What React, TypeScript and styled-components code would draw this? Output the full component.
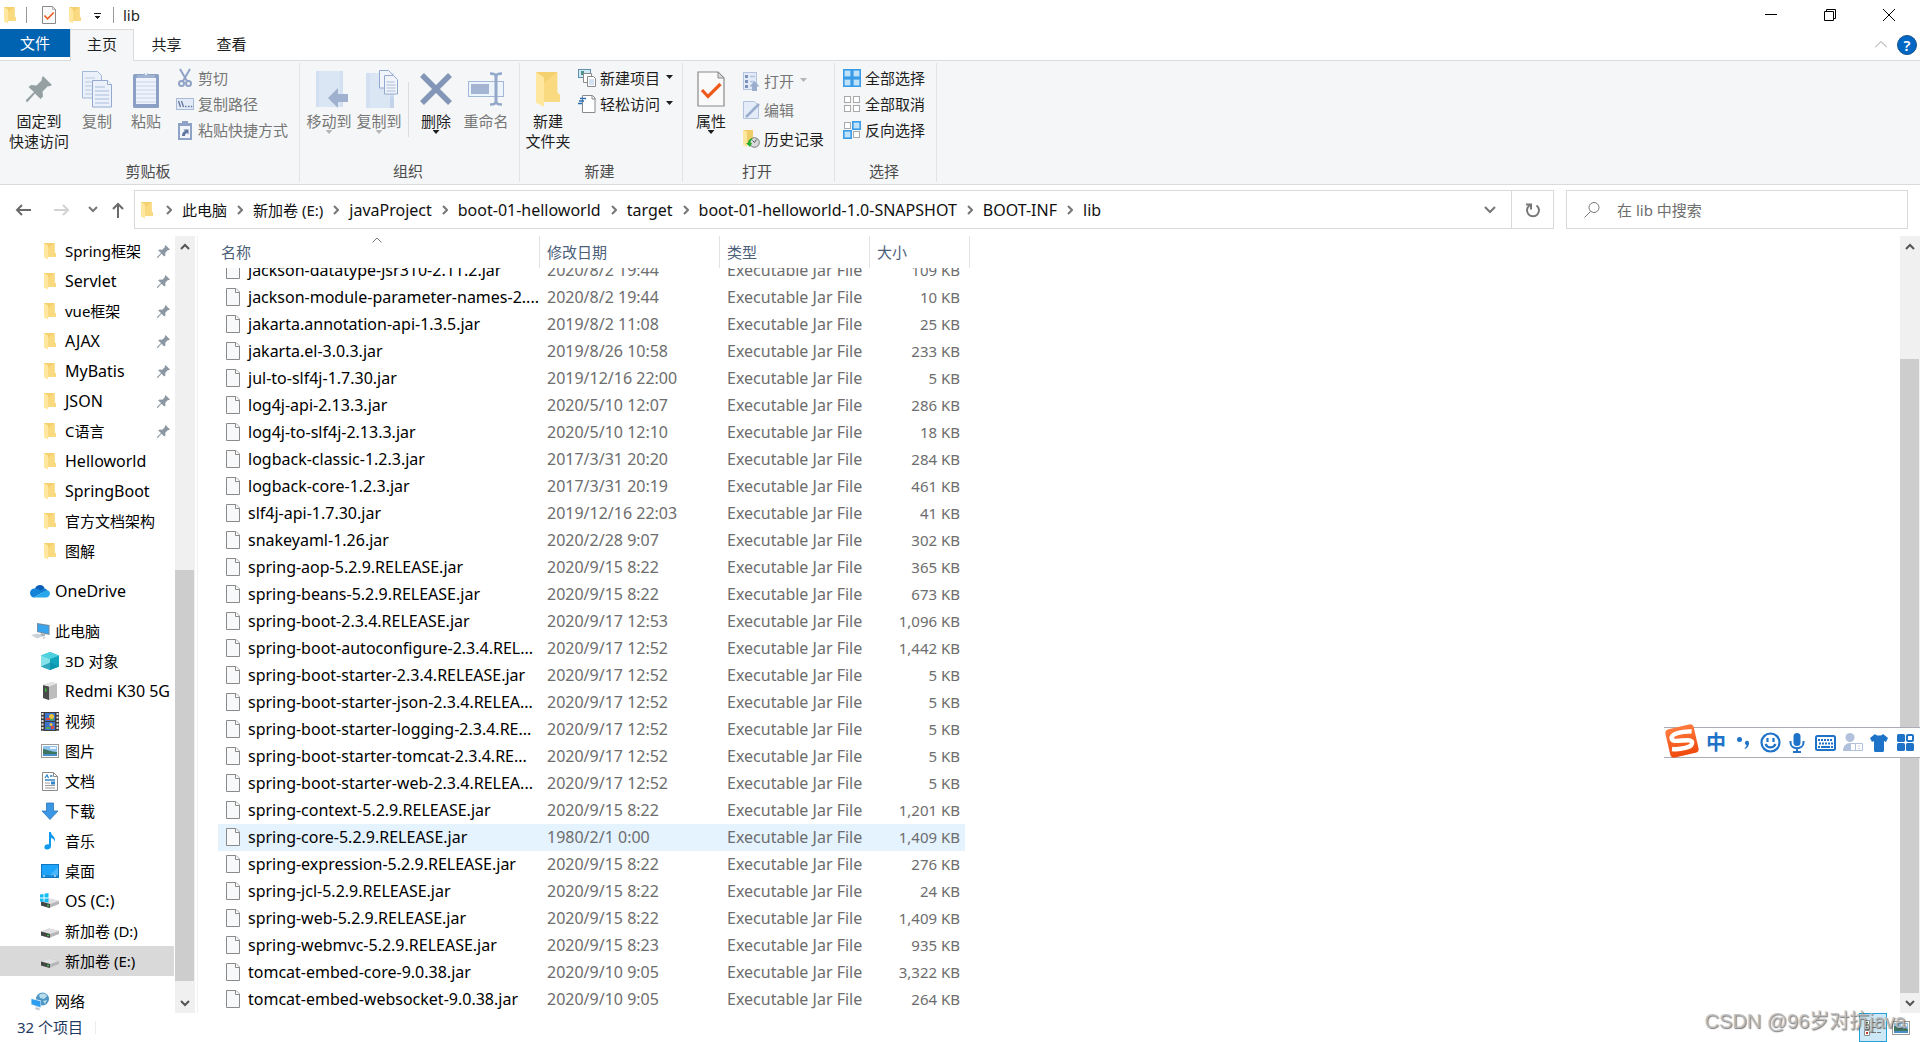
import React from "react";
import styled, { createGlobalStyle } from "styled-components";

const Global = createGlobalStyle`
  *, *::before, *::after { box-sizing: border-box; }
  body { margin: 0; background: #fff; overflow: hidden; }
  button, input { font: inherit; color: inherit; }
  button { border: 0; padding: 0; background: none; }
  svg { display: block; flex: none; }
`;

const Window = styled.div`
  display: flex;
  flex-direction: column;
  height: 100vh;
  font: 15px/20px "Noto Sans", "Noto Sans CJK SC", sans-serif;
  color: #1e1e1e;
  background: #fff;
`;

/* ---------- title bar ---------- */

const TitleBar = styled.header`
  display: flex;
  align-items: center;
  height: 29px;
  padding: 0 2px 0 3px;
`;
const QuickAccess = styled.div`
  display: flex;
  align-items: center;
  gap: 9px;
  flex: 1;
`;
const Bar = styled.span`
  width: 1px;
  height: 16px;
  background: #999;
`;
const QuickTools = styled.div`
  display: flex;
  align-items: center;
  gap: 12px;
  padding: 0 3px 0 6px;
`;
const Title = styled.h1`
  margin: 0;
  font-size: 15px;
  font-weight: 400;
`;
const WindowButton = styled.button`
  display: grid;
  place-items: center;
  width: 59px;
  height: 29px;
`;

/* ---------- tabs ---------- */

const TabRow = styled.nav`
  display: flex;
  height: 32px;
  border-bottom: 1px solid #dadbdc;
`;
const FileTab = styled.button`
  width: 70px;
  height: 28px;
  color: #fff;
  background: #0063b1;
`;
const Tab = styled.button<{ $active?: boolean }>`
  width: ${(p) => (p.$active ? 64 : 65)}px;
  height: 32px;
  padding-bottom: 3px;
  border: 1px solid ${(p) => (p.$active ? "#dadbdc" : "transparent")};
  border-bottom: 0;
  background: ${(p) => (p.$active ? "#f5f6f7" : "transparent")};
`;
const TabTools = styled.div`
  display: flex;
  align-items: center;
  gap: 10px;
  margin-left: auto;
  padding-right: 3px;
`;
const Help = styled.button`
  width: 20px;
  height: 20px;
  border: 1px solid #17518a;
  border-radius: 50%;
  color: #fff;
  background: #0067c5;
  font-weight: 600;
  line-height: 18px;
`;

/* ---------- ribbon ---------- */

const Ribbon = styled.section`
  display: flex;
  height: 124px;
  padding: 2px 0;
  background: #f5f6f7;
  border-bottom: 1px solid #dadbdc;
`;
const Group = styled.div<{ $width: number }>`
  display: flex;
  flex-direction: column;
  width: ${(p) => p.$width}px;
  padding: 2px 0 1px 4px;
  border-right: 1px solid #e2e3e4;
`;
const GroupBody = styled.div`
  display: flex;
  flex: 1;
`;
const GroupLabel = styled.div`
  height: 20px;
  padding-right: 7px;
  color: #4c4c4c;
  text-align: center;
`;
const BigButton = styled.button<{ $width: number; $off?: boolean }>`
  display: flex;
  flex-direction: column;
  align-items: center;
  width: ${(p) => p.$width}px;
  padding-top: 3px;
  white-space: nowrap;
  color: ${(p) => (p.$off ? "#767676" : "#1e1e1e")};
`;
const BigIcon = styled.span`
  display: grid;
  place-items: center;
  height: 43px;
  padding-bottom: 2px;
`;
const Divider = styled.span`
  width: 1px;
  height: 55px;
  margin: 17px 4px 0;
  background: #dcdddf;
`;
const SmallColumn = styled.div<{ $left: number; $roomy?: boolean }>`
  display: flex;
  flex-direction: column;
  gap: ${(p) => (p.$roomy ? 9 : 6)}px;
  padding-top: ${(p) => (p.$roomy ? 6 : 3)}px;
  padding-left: ${(p) => p.$left}px;
`;
const SmallButton = styled.button<{ $off?: boolean }>`
  display: flex;
  align-items: center;
  gap: 4px;
  height: 20px;
  white-space: nowrap;
  color: ${(p) => (p.$off ? "#767676" : "#1e1e1e")};
`;
const Caret = styled.span<{ $off?: boolean; $below?: boolean }>`
  width: 7px;
  height: 4px;
  margin: ${(p) => (p.$below ? "-1px 0 0" : "0 0 2px 2px")};
  background: ${(p) => (p.$off ? "#b5b5b5" : "#1e1e1e")};
  clip-path: polygon(0 0, 100% 0, 50% 100%);
`;

/* ---------- address row ---------- */

const AddressRow = styled.div`
  display: flex;
  align-items: center;
  height: 51px;
  padding: 0 12px 2px 0;
`;
const NavButtons = styled.div`
  display: flex;
  align-items: center;
  width: 134px;
  padding-left: 15px;
`;
const NavButton = styled.button<{ $width: number }>`
  width: ${(p) => p.$width}px;
  display: flex;
`;
const AddressBox = styled.div`
  display: flex;
  flex: 1;
  height: 39px;
  border: 1px solid #d9d9d9;
`;
const Crumbs = styled.div`
  display: flex;
  align-items: center;
  gap: 10px;
  flex: 1;
  padding-left: 5px;
  color: #111;
  white-space: nowrap;
`;
const Crumb = styled.a<{ $size: number }>`
  color: inherit;
  font-size: ${(p) => p.$size}px;
  text-decoration: none;
`;
const FirstIcon = styled.span`
  padding-right: 2px;
`;
const AddressButton = styled.button<{ $edge?: boolean }>`
  display: grid;
  place-items: center;
  width: 42px;
  border-left: ${(p) => (p.$edge ? "1px solid #d9d9d9" : "0")};
`;
const SearchBox = styled.label`
  display: flex;
  align-items: center;
  gap: 17px;
  width: 342px;
  height: 39px;
  margin-left: 12px;
  padding-left: 17px;
  border: 1px solid #d9d9d9;
`;
const SearchInput = styled.input`
  flex: 1;
  min-width: 0;
  border: 0;
  outline: 0;
  padding: 0;
  background: none;
  &::placeholder { color: #6d6d6d; opacity: 1; }
`;

/* ---------- body ---------- */

const Body = styled.main`
  display: flex;
  flex: 1;
  min-height: 0;
`;
const Sidebar = styled.aside`
  display: flex;
  width: 198px;
  padding-right: 2px;
  border-right: 1px solid #f2f2f2;
`;
const Tree = styled.nav`
  flex: 1;
  overflow: hidden;
  padding-right: 1px;
`;
const TreeGroup = styled.div`
  margin-bottom: 10px;
`;
const TreeItem = styled.a<{ $root?: boolean; $selected?: boolean; $size: number }>`
  display: flex;
  align-items: center;
  gap: 5px;
  height: 30px;
  padding: 0 4px 0 ${(p) => (p.$root ? 30 : 40)}px;
  color: #000;
  font-size: ${(p) => p.$size}px;
  text-decoration: none;
  white-space: nowrap;
  background: ${(p) => (p.$selected ? "#d9d9d9" : "transparent")};
`;
const TreeLabel = styled.span`
  flex: 1;
`;
const IconSlot = styled.span`
  display: grid;
  place-items: center;
  width: 20px;
  height: 20px;
`;

const Track = styled.div`
  display: flex;
  flex-direction: column;
  width: 20px;
  background: #f0f0f0;
`;
const TrackButton = styled.button`
  display: grid;
  place-items: center;
  height: 20px;
`;
const TrackSpace = styled.div<{ $share: number }>`
  flex: ${(p) => p.$share} 1 0;
`;
const Thumb = styled(TrackSpace)`
  width: 19px;
  background: #cdcdcd;
`;

const FilePane = styled.section`
  display: flex;
  flex: 1;
  padding-left: 20px;
`;
const FileTable = styled.table`
  display: flex;
  flex-direction: column;
  flex: 1;
  min-height: 0;
`;
const columns = "322px 180px 150px 1fr";
const Head = styled.thead`
  display: block;
`;
const HeadRow = styled.tr`
  display: grid;
  grid-template-columns: ${columns};
  width: 752px;
  height: 32px;
`;
const HeadCell = styled.th<{ $first?: boolean }>`
  position: relative;
  padding: 6px 0 0 ${(p) => (p.$first ? 3 : 7)}px;
  border-right: 1px solid #e3e3e3;
  font-weight: 400;
  text-align: left;
  color: #4c607a;
`;
const SortMark = styled.span`
  position: absolute;
  top: 1px;
  left: 50%;
  margin-left: -7px;
`;
const Rows = styled.tbody`
  display: flex;
  flex: 1;
  flex-direction: column;
  justify-content: flex-end;
  min-height: 0;
  overflow: hidden;
`;
const Row = styled.tr<{ $hover?: boolean }>`
  display: grid;
  grid-template-columns: ${columns};
  flex: none;
  width: 747px;
  height: 27px;
  line-height: 27px;
  color: #6d6d6d;
  background: ${(p) => (p.$hover ? "#e5f3ff" : "transparent")};
`;
const Cell = styled.td<{ $right?: boolean }>`
  padding: 0 ${(p) => (p.$right ? 5 : 0)}px 0 7px;
  font-size: ${(p) => (p.$right ? 15 : 16)}px;
  text-align: ${(p) => (p.$right ? "right" : "left")};
  white-space: nowrap;
`;
const NameCell = styled.td`
  display: flex;
  align-items: center;
  gap: 8px;
  min-width: 0;
  padding: 0 0 0 8px;
  font-size: 16px;
  color: #000;
`;
const FileName = styled.span`
  white-space: nowrap;
`;

/* ---------- status bar ---------- */

const StatusBar = styled.footer`
  display: flex;
  align-items: center;
  height: 29px;
  padding: 0 5px 0 17px;
  color: #1f3a5f;
`;
const StatusText = styled.span`
  padding: 0 12px 2px 0;
`;
const StatusRule = styled.span`
  width: 1px;
  height: 13px;
  margin-right: auto;
  background: #ececec;
`;
const ViewButton = styled.button<{ $on?: boolean }>`
  display: grid;
  place-items: center;
  width: 28px;
  height: 29px;
  border: ${(p) => (p.$on ? "1px solid #26a0da" : "0")};
  background: ${(p) => (p.$on ? "#cce8f6" : "transparent")};
`;
const Watermark = styled.div`
  position: absolute;
  right: 14px;
  bottom: 8px;
  font: 20px/26px "Liberation Sans", "Noto Sans CJK SC", sans-serif;
  white-space: nowrap;
  color: rgba(190, 190, 190, 0.85);
  text-shadow: 1px 1px 1px rgba(70, 70, 70, 0.7);
  pointer-events: none;
`;

/* ---------- input method bar ---------- */

const ImeBar = styled.div`
  position: absolute;
  right: 0;
  top: 727px;
  display: flex;
  align-items: center;
  gap: 7px;
  height: 31px;
  padding: 0 5px 0 42px;
  border: 1px solid #a9adb3;
  border-width: 1px 0;
  background: linear-gradient(to right, transparent 20px, #fff 20px);
`;
const ImeLogo = styled.span`
  position: absolute;
  left: 0;
  top: -5px;
`;
const ImeButton = styled.button<{ $width?: number }>`
  display: grid;
  place-items: center;
  width: ${(p) => p.$width ?? 20}px;
  height: 24px;
  color: #1e73c8;
  font-size: 20px;
  font-weight: 700;
  line-height: 24px;
`;

/* ---------- icons ---------- */

const Folder = ({ w = 14, h = 18 }: { w?: number; h?: number }) => (
  <svg width={w} height={h} viewBox="0 0 14 18" preserveAspectRatio="none">
    <path d="M1 1h10.600v9.600l1.400 1.200V15H5z" fill="#f4d06f" />
    <path d="M5 6l6.600-5v9.600l1.400 1.200V15H5z" fill="#fbdc84" opacity=".8" />
    <path d="M1 1l4 2.400v14L1 15.500z" fill="#ffe79f" />
  </svg>
);

const Pin = ({ size = 13, color = "#8b98a3" }: { size?: number; color?: string }) => (
  <svg width={size} height={size} viewBox="0 0 26 26">
    <path d="M17 0l9 9-3 1.500-1-.5-5.500 5.500.5 5-2.500 2.500L9 17.500 1.500 26 0 25.500 0 24 8 16 2.500 11l2.500-2 5.500.5L16 4l-.5-1z" fill={color} />
  </svg>
);

const PageIcon = () => (
  <svg width="14" height="19" viewBox="0 0 14 19">
    <path d="M.5.5h9.500l3.500 3.500v13.500H.5z" fill="#f8f9fa" stroke="#8a8a8a" />
    <path d="M9.500.5v4h4" fill="#fff" stroke="#8a8a8a" />
  </svg>
);

const CheckPage = ({ w, h }: { w: number; h: number }) => (
  <svg width={w} height={h} viewBox="0 0 28 36">
    <path d="M1 1h20l6 6v28H1z" fill="#fafafa" stroke="#8a8a8a" strokeWidth={w > 20 ? 1.2 : 2} />
    <path d="M21 1v6h6z" fill="#ddd" stroke="#8a8a8a" />
    <path d="M5 19l6 6.500L23.500 13" fill="none" stroke="#ee5a1c" strokeWidth="3.200" />
  </svg>
);

const Chevron = ({ d, w, h, c = "#666", s = 2 }: { d: string; w: number; h: number; c?: string; s?: number }) => (
  <svg width={w} height={h} viewBox={`0 0 ${w} ${h}`}>
    <path d={d} fill="none" stroke={c} strokeWidth={s} />
  </svg>
);

const CopyIcon = () => (
  <svg width="32" height="38" viewBox="0 0 32 38">
    <path d="M1.500 1.500h15l4 4V28h-19z" fill="#eaf1fb" stroke="#a3b7d8" />
    <path d="M4 8h10M4 12h14M4 16h14M4 20h14M4 24h14" stroke="#b9c9e3" />
    <path d="M11.500 10.500h15l4 4V37h-19z" fill="#eaf1fb" stroke="#94a9cf" />
    <path d="M26.500 10.500v4h4" fill="#fff" stroke="#94a9cf" />
    <path d="M14 17h10M14 21h14M14 25h14M14 29h14M14 33h14" stroke="#a9bbda" />
  </svg>
);

const PasteIcon = () => (
  <svg width="28" height="38" viewBox="0 0 28 38">
    <rect x="1" y="4" width="26" height="34" rx="1.500" fill="#8c9fc5" />
    <path d="M4 8h20v26H4z" fill="#eff4fc" />
    <path d="M4 12h20M4 16h20M4 20h20M4 24h20M4 28h20M4 32h20" stroke="#c6d3e8" />
    <path d="M5 8V5h6a3.200 3.200 0 0 1 6 0h6v3z" fill="#a3b4d3" />
    <circle cx="14" cy="4" r="1" fill="#fff" />
  </svg>
);

const CutIcon = () => (
  <svg width="18" height="20" viewBox="0 0 18 20" fill="none" stroke="#8fa3c7" strokeWidth="2">
    <path d="M4 1l7 12M14 1L7 13" />
    <circle cx="5.500" cy="15.500" r="2.500" />
    <circle cx="12.500" cy="15.500" r="2.500" />
  </svg>
);

const PathIcon = () => (
  <svg width="18" height="12" viewBox="0 0 18 12">
    <rect x=".5" y=".5" width="17" height="11" fill="#e3ebf7" stroke="#a9bad6" />
    <path d="M2.500 3l2 6M5.500 3l2 6" stroke="#61779f" strokeWidth="1.300" />
    <path d="M9 8.500h1.500M12 8.500h1.500M14.800 8.500h1.500" stroke="#61779f" strokeWidth="1.500" />
  </svg>
);

const ShortcutIcon = () => (
  <svg width="18" height="19" viewBox="0 0 18 19">
    <rect x="2" y="2" width="14" height="17" fill="#8fa3c7" />
    <path d="M4 5h10v12H4z" fill="#f2f6fc" />
    <path d="M6 0h6v4H6z" fill="#8fa3c7" />
    <path d="M6 15c0-3 1-4 3-5L7.500 8.500H12.500v5L11 12c-1.500.8-2 1.500-2 3z" fill="#61779f" />
  </svg>
);

const MoveIcon = () => (
  <svg width="40" height="38" viewBox="-6 0 40 38">
    <path d="M1 1h27v36H1z" fill="#d3e0f2" />
    <path d="M4 1h21v36H4z" fill="#dbe6f5" />
    <path d="M23 18v6h10v8H23v6L13 28z" fill="#9fb1cf" />
  </svg>
);

const CopyToIcon = () => (
  <svg width="40" height="38" viewBox="-6 0 40 38">
    <path d="M1 3h28v35H1z" fill="#d3e0f2" />
    <path d="M5 3h20v35H5z" fill="#dbe6f5" />
    <path d="M14.500.5h9l4 4V18h-13z" fill="#f1f5fb" stroke="#94a9cf" />
    <path d="M19.500 5.500h9l4 4V24h-13z" fill="#f1f5fb" stroke="#94a9cf" />
    <path d="M21.500 12h8M21.500 15h9M21.500 18h9M21.500 21h9" stroke="#a9bbda" />
    <path d="M25 38V28l2-3 2 3v10z" fill="#c3d3ea" />
  </svg>
);

const DeleteIcon = () => (
  <svg width="32" height="32" viewBox="0 0 32 32">
    <path d="M2 2l28 28M30 2L2 30" stroke="#8496b8" strokeWidth="5.500" />
  </svg>
);

const RenameIcon = () => (
  <svg width="36" height="34" viewBox="0 0 36 34">
    <rect x=".5" y="9.500" width="35" height="15" fill="#eef4fc" stroke="#a3b7d8" />
    <rect x="3" y="12" width="18" height="10" fill="#a3b5d3" />
    <path d="M28 3v28" stroke="#93a7c9" strokeWidth="3" />
    <path d="M22 1.500c4 0 6 1 6 3 0-2 2-3 6-3M22 32.500c4 0 6-1 6-3 0 2 2 3 6 3" fill="none" stroke="#93a7c9" strokeWidth="2.500" />
  </svg>
);

const NewItemIcon = () => (
  <svg width="18" height="18" viewBox="0 0 18 18">
    <rect x=".5" y=".5" width="12" height="8" fill="#cfe9f5" stroke="#5f8fae" />
    <path d="M3 2h3v4H3z" fill="#4b8f86" />
    <path d="M5.500 4.500h8v9h-8z" fill="#fff" stroke="#8a8a8a" />
    <path d="M9.500 7.500h6l2 2v8h-8z" fill="#fff" stroke="#8a8a8a" />
    <path d="M11 11h5M11 13h5M11 15h5" stroke="#a8c6e6" />
  </svg>
);

const EasyIcon = () => (
  <svg width="18" height="18" viewBox="0 0 18 18">
    <path d="M4.500.5h10l2.500 2.500v14.500h-12.500z" fill="#fff" stroke="#8a8a8a" />
    <path d="M14 .5V4h3.500" fill="none" stroke="#8a8a8a" />
    <path d="M2 3.500h6M1 6h5M0 8.500h4" stroke="#2a6fb5" strokeWidth="1.400" />
  </svg>
);

const OpenIcon = () => (
  <svg width="17" height="19" viewBox="0 0 17 19">
    <rect x=".5" y=".5" width="13" height="17" fill="#e3ebf7" stroke="#b3c3de" />
    <path d="M2 3h3v3H2zM2 8h3v3H2zM2 13h3v3H2z" fill="#7d93bd" />
    <path d="M7 4.500h5M7 9.500h4" stroke="#b3c3de" strokeWidth="1.500" />
    <path d="M11.500 9l5 5.500H14V19H9v-4.500H6.500z" fill="#9badcd" />
  </svg>
);

const EditIcon = () => (
  <svg width="17" height="18" viewBox="0 0 17 18">
    <path d="M.5.5h11l4 4v13H.5z" fill="#e3ecf8" stroke="#b3c3de" />
    <path d="M16 3L5 14l-2 2" stroke="#9badcd" strokeWidth="2.500" />
  </svg>
);

const HistoryIcon = () => (
  <svg width="17" height="18" viewBox="0 0 17 18">
    <path d="M0 0h10v15H3z" fill="#f0cd69" />
    <path d="M0 0l4 2v15l-4-2z" fill="#ffe79f" />
    <circle cx="11.500" cy="12.500" r="4.800" fill="#d8dadb" stroke="#7a7a7a" />
    <path d="M11.500 12.500l2-3M11.500 12.500l-2-2" stroke="#555" />
    <path d="M9 8c-3 1-4 3-4 5H3l4 4 2-4H7.500c0-2 .5-3 2-4z" fill="#23ab2c" />
  </svg>
);

const SelectIcon = ({ on }: { on: number[] }) => (
  <svg width="18" height="18" viewBox="0 0 18 18">
    {[0, 1, 2, 3].map((i) => {
      const x = (i % 2) * 9;
      const y = Math.floor(i / 2) * 9;
      return on.includes(i) ? (
        <rect key={i} x={x + 0.8} y={y + 0.8} width="7.400" height="7.400" fill="#bfe2fc" stroke="#3a9be6" strokeWidth="1.600" />
      ) : (
        <rect key={i} x={x + 1.5} y={y + 1.5} width="6" height="6" fill="#fff" stroke="#a9a9a9" />
      );
    })}
  </svg>
);

const CloudIcon = () => (
  <svg width="20" height="14" viewBox="0 0 20 14">
    <path d="M5 5a5 5 0 0 1 9.500-1L12 9 2 9z" fill="#0a5eb8" />
    <path d="M4.500 4.500C2 4.500 0 6.500 0 9s2 4.500 4 4.500L13 8 8 5c-1-.5-2-.5-3.500-.5z" fill="#1483d8" />
    <path d="M9 7l4-2.500c3-.5 4 1 4.300 2.500L19 9z" fill="#1277cd" />
    <path d="M4 13.500h12a4 4 0 0 0 3-6.500c-1.500-1-3-.6-4-.2z" fill="#28a8ea" />
  </svg>
);

const PcIcon = () => (
  <svg width="20" height="18" viewBox="0 0 20 18">
    <path d="M7 1l12.500 2v10L7 10z" fill="#6f8aa1" />
    <path d="M8 2.200l10.500 1.700v7.800L8 9.200z" fill="#38a5ee" />
    <path d="M11 11l4 1v2l-3 .5-2-1z" fill="#a9b2ba" />
    <path d="M1 13l7-1.500 5 2.500-6 2.500zM12 16l2-1 2 .5-2 1.500z" fill="#cdd2d6" />
  </svg>
);

const CubeIcon = () => (
  <svg width="18" height="18" viewBox="0 0 18 18">
    <path d="M9 0l9 3.500v11L9 18 0 14.500v-11z" fill="#35bfd1" />
    <path d="M0 3.500L9 7v11l-9-3.500z" fill="#86e2ea" />
    <path d="M9 7l9-3.500v11L9 18z" fill="#14a4bb" />
    <path d="M0 3.500L9 0l9 3.500L9 7z" fill="#4fd0dd" />
    <path d="M0 14.500l9-4 9 4L9 18z" fill="#0c8fa8" opacity=".7" />
  </svg>
);

const PhoneIcon = () => (
  <svg width="16" height="18" viewBox="0 0 16 18">
    <path d="M1 3l9-3 5 1.500v14L7 18l-6-2z" fill="#bdbdbd" />
    <path d="M1 3l6 1.500V18l-6-2z" fill="#4a4a4a" />
    <path d="M1 3l9-3 5 1.500L7 4.500z" fill="#e6e6e6" />
    <path d="M3 6.500h1.500v3H3z" fill="#35c13a" />
  </svg>
);

const VideoIcon = () => (
  <svg width="18" height="19" viewBox="0 0 18 19">
    <path d="M0 0h18v19H0z" fill="#3d3d3d" />
    <path d="M1.500 1v18M16.500 1v18" stroke="#e3e3e3" strokeWidth="2" strokeDasharray="2 1.500" />
    <path d="M4 1h10v8H4zM4 10h10v8H4z" fill="#3d72cf" />
    <circle cx="10.500" cy="4.500" r="2.500" fill="#eac33a" />
    <path d="M5 6h4v2H5zM10 14h3v3h-3z" fill="#d9483b" />
    <path d="M5 15h4v2H5zM9 7h4v1.500H9z" fill="#4fa84a" />
    <circle cx="10" cy="12.500" r="1.500" fill="#eac33a" />
  </svg>
);

const PictureIcon = () => (
  <svg width="18" height="14" viewBox="0 0 18 14">
    <rect x=".5" y=".5" width="17" height="13" fill="#fff" stroke="#9a9a9a" />
    <path d="M2 2h14v10H2z" fill="#8fc4ee" />
    <path d="M2 5c3 0 6 2.500 14 3v2H2z" fill="#3f7662" />
    <path d="M2 10h14v2H2z" fill="#4a8fc9" />
    <path d="M9 3h6v2H9z" fill="#e9f4fc" />
  </svg>
);

const DocIcon = () => (
  <svg width="16" height="19" viewBox="0 0 16 19">
    <path d="M.5.5h11l4 4v14H.5z" fill="#fff" stroke="#8a8a8a" />
    <path d="M11.500.5v4h4" fill="none" stroke="#8a8a8a" />
    <path d="M3 6l2-3 1.500 3M8 4h2.500M3 8h10" stroke="#3485c7" strokeWidth="1.300" fill="none" />
    <path d="M3 11h5M3 13.500h10M3 16h10" stroke="#9b9b9b" strokeWidth="1.200" />
    <path d="M9 9.500h4v3H9z" fill="#3485c7" />
  </svg>
);

const DownloadIcon = () => (
  <svg width="18" height="18" viewBox="0 0 18 18">
    <path d="M5.500 1h7v8H17l-8 8.500L1 9h4.500z" fill="#3b96e4" stroke="#2a76bd" strokeWidth=".8" />
  </svg>
);

const MusicIcon = () => (
  <svg width="14" height="18" viewBox="0 0 14 18">
    <path d="M6 0h2c0 4 5 4 4 10-.5-2-1.500-3.500-4-4v8c0 2-1.500 3.500-4 3.500S1 16 1.500 14.500 4 12 6 12.500z" fill="#109bf0" />
  </svg>
);

const DesktopIcon = () => (
  <svg width="18" height="14" viewBox="0 0 18 14">
    <rect x=".5" y=".5" width="17" height="13" fill="#1ea3fb" stroke="#1377bd" />
    <path d="M8 12L17 3v9z" fill="#4bb6fc" />
    <path d="M1 12h16" stroke="#0f6bb0" />
    <path d="M2 12h2M13 12h2" stroke="#fff" />
  </svg>
);

const DriveIcon = ({ os }: { os?: boolean }) => (
  <svg width="20" height="16" viewBox="0 0 20 16">
    <path d="M1 8.500L9 5.500l10 2.500v3L9 15 1 12.500z" fill="#b6b6b8" />
    <path d="M1 8.500L9 5.500l10 2.500-9 3z" fill="#e0e0e3" />
    <path d="M1 8.500l9 2.500v4l-9-2.500z" fill="#454545" />
    <path d="M7 12.500h2" stroke="#3bc43e" strokeWidth="1.500" />
    {os && <path d="M0 1.500L3.500 1v3.500H0zM4.500.8L8.500 0v4.500h-4zM0 5.500h3.500V9L0 8.500zM4.500 5.500h4v4l-4-.6z" fill="#15bdf5" />}
  </svg>
);

const NetworkIcon = () => (
  <svg width="20" height="19" viewBox="0 0 20 19">
    <circle cx="12.500" cy="7" r="6.500" fill="#4d95c4" />
    <path d="M9 3c3-2 6-2 8 1l-3 3-4-1zM13 9l4-1-2 4z" fill="#b8dceb" />
    <path d="M1 6l10 2.500v8L1 13z" fill="#e0eef7" />
    <path d="M1.500 7l9 2.200v6L1.500 12.300z" fill="#2d9df0" />
    <path d="M6 15l4 1.500-1 2-4-1.500z" fill="#c2c8cc" />
  </svg>
);

const SogouLogo = () => (
  <svg width="37" height="36" viewBox="0 0 37 36">
    <defs>
      <linearGradient id="logo" x1="0" y1="0" x2="0" y2="1">
        <stop offset="0" stopColor="#ff7a3c" />
        <stop offset="1" stopColor="#ef4a0e" />
      </linearGradient>
    </defs>
    <g transform="rotate(-13 18 18)">
      <rect x="3.500" y="3.500" width="29" height="29" rx="4" fill="url(#logo)" />
      <path d="M29.500 11C22 8.500 8.500 8 8.500 13.500c0 5.500 19 2.500 19 8 0 5.500-14 4.500-21 2" fill="none" stroke="#fff" strokeWidth="4.500" />
    </g>
  </svg>
);

/* ---------- data ---------- */

const files: [string, string, string][] = [
  ["jackson-datatype-jsr310-2.11.2.jar", "2020/8/2 19:44", "109 KB"],
  ["jackson-module-parameter-names-2....", "2020/8/2 19:44", "10 KB"],
  ["jakarta.annotation-api-1.3.5.jar", "2019/8/2 11:08", "25 KB"],
  ["jakarta.el-3.0.3.jar", "2019/8/26 10:58", "233 KB"],
  ["jul-to-slf4j-1.7.30.jar", "2019/12/16 22:00", "5 KB"],
  ["log4j-api-2.13.3.jar", "2020/5/10 12:07", "286 KB"],
  ["log4j-to-slf4j-2.13.3.jar", "2020/5/10 12:10", "18 KB"],
  ["logback-classic-1.2.3.jar", "2017/3/31 20:20", "284 KB"],
  ["logback-core-1.2.3.jar", "2017/3/31 20:19", "461 KB"],
  ["slf4j-api-1.7.30.jar", "2019/12/16 22:03", "41 KB"],
  ["snakeyaml-1.26.jar", "2020/2/28 9:07", "302 KB"],
  ["spring-aop-5.2.9.RELEASE.jar", "2020/9/15 8:22", "365 KB"],
  ["spring-beans-5.2.9.RELEASE.jar", "2020/9/15 8:22", "673 KB"],
  ["spring-boot-2.3.4.RELEASE.jar", "2020/9/17 12:53", "1,096 KB"],
  ["spring-boot-autoconfigure-2.3.4.REL...", "2020/9/17 12:52", "1,442 KB"],
  ["spring-boot-starter-2.3.4.RELEASE.jar", "2020/9/17 12:52", "5 KB"],
  ["spring-boot-starter-json-2.3.4.RELEA...", "2020/9/17 12:52", "5 KB"],
  ["spring-boot-starter-logging-2.3.4.RE...", "2020/9/17 12:52", "5 KB"],
  ["spring-boot-starter-tomcat-2.3.4.RE...", "2020/9/17 12:52", "5 KB"],
  ["spring-boot-starter-web-2.3.4.RELEA...", "2020/9/17 12:52", "5 KB"],
  ["spring-context-5.2.9.RELEASE.jar", "2020/9/15 8:22", "1,201 KB"],
  ["spring-core-5.2.9.RELEASE.jar", "1980/2/1 0:00", "1,409 KB"],
  ["spring-expression-5.2.9.RELEASE.jar", "2020/9/15 8:22", "276 KB"],
  ["spring-jcl-5.2.9.RELEASE.jar", "2020/9/15 8:22", "24 KB"],
  ["spring-web-5.2.9.RELEASE.jar", "2020/9/15 8:22", "1,409 KB"],
  ["spring-webmvc-5.2.9.RELEASE.jar", "2020/9/15 8:23", "935 KB"],
  ["tomcat-embed-core-9.0.38.jar", "2020/9/10 9:05", "3,322 KB"],
  ["tomcat-embed-websocket-9.0.38.jar", "2020/9/10 9:05", "264 KB"],
];

const pinned = ["Spring框架", "Servlet", "vue框架", "AJAX", "MyBatis", "JSON", "C语言"];
const recent = ["Helloworld", "SpringBoot", "官方文档架构", "图解"];

const places: [string, React.ReactNode][] = [
  ["3D 对象", <CubeIcon />],
  ["Redmi K30 5G", <PhoneIcon />],
  ["视频", <VideoIcon />],
  ["图片", <PictureIcon />],
  ["文档", <DocIcon />],
  ["下载", <DownloadIcon />],
  ["音乐", <MusicIcon />],
  ["桌面", <DesktopIcon />],
  ["OS (C:)", <DriveIcon os />],
  ["新加卷 (D:)", <DriveIcon />],
  ["新加卷 (E:)", <DriveIcon />],
];

const crumbs = [
  "此电脑",
  "新加卷 (E:)",
  "javaProject",
  "boot-01-helloworld",
  "target",
  "boot-01-helloworld-1.0-SNAPSHOT",
  "BOOT-INF",
  "lib",
];

const sizeFor = (text: string) => (/[\u4e00-\u9fff]/.test(text) ? 15 : 16);

/* ---------- parts ---------- */

type BigProps = { icon: React.ReactNode; lines: string[]; width: number; off?: boolean; menu?: boolean };
const Big = ({ icon, lines, width, off, menu }: BigProps) => (
  <BigButton $width={width} $off={off}>
    <BigIcon>{icon}</BigIcon>
    {lines.map((line) => (
      <span key={line}>{line}</span>
    ))}
    {menu && <Caret $off={off} $below />}
  </BigButton>
);

type SmallProps = { icon: React.ReactNode; text: string; off?: boolean; menu?: boolean };
const Small = ({ icon, text, off, menu }: SmallProps) => (
  <SmallButton $off={off}>
    {icon}
    {text}
    {menu && <Caret $off={off} />}
  </SmallButton>
);

const ScrollBar = ({ before, thumb, after }: { before: number; thumb: number; after: number }) => (
  <Track>
    <TrackButton aria-label="向上滚动">
      <Chevron w={10} h={7} d="M1 6l4-4 4 4" c="#555" />
    </TrackButton>
    <TrackSpace $share={before} />
    <Thumb $share={thumb} />
    <TrackSpace $share={after} />
    <TrackButton aria-label="向下滚动">
      <Chevron w={10} h={7} d="M1 1l4 4 4-4" c="#555" />
    </TrackButton>
  </Track>
);

type ItemProps = { icon: React.ReactNode; text: string; root?: boolean; selected?: boolean; pin?: boolean };
const Item = ({ icon, text, root, selected, pin }: ItemProps) => (
  <TreeItem href="#" $root={root} $selected={selected} $size={sizeFor(text)}>
    <IconSlot>{icon}</IconSlot>
    <TreeLabel>{text}</TreeLabel>
    {pin && <Pin />}
  </TreeItem>
);

export default function App() {
  return (
    <Window>
      <Global />
      <TitleBar>
        <QuickAccess>
          <Folder />
          <Bar />
          <QuickTools>
            <CheckPage w={14} h={18} />
            <Folder />
            <Chevron w={7} h={11} d="M0 4.500h7M1 7.500h5M2 8.500h3M3 9.500h1" c="#1e1e1e" s={1} />
          </QuickTools>
          <Bar />
          <Title>lib</Title>
        </QuickAccess>
        <WindowButton aria-label="最小化">
          <Chevron w={12} h={13} d="M0 6.500h12" c="#000" s={1} />
        </WindowButton>
        <WindowButton aria-label="还原">
          <Chevron w={12} h={12} d="M.5 2.500h9v9h-9zM2.500 2.500v-2h9v9h-2" c="#000" s={1} />
        </WindowButton>
        <WindowButton aria-label="关闭">
          <Chevron w={12} h={12} d="M0 0l12 12M12 0L0 12" c="#000" s={1} />
        </WindowButton>
      </TitleBar>

      <TabRow>
        <FileTab>文件</FileTab>
        <Tab $active>主页</Tab>
        <Tab>共享</Tab>
        <Tab>查看</Tab>
        <TabTools>
          <Chevron w={12} h={7} d="M0 6.500l6-6 6 6" c="#9a9a9a" s={1} />
          <Help>?</Help>
        </TabTools>
      </TabRow>

      <Ribbon>
        <Group $width={300}>
          <GroupBody>
            <Big width={70} icon={<Pin size={26} color="#95a0a3" />} lines={["固定到", "快速访问"]} />
            <Big width={46} off icon={<CopyIcon />} lines={["复制"]} />
            <Big width={52} off icon={<PasteIcon />} lines={["粘贴"]} />
            <SmallColumn $left={4}>
              <Small off icon={<CutIcon />} text="剪切" />
              <Small off icon={<PathIcon />} text="复制路径" />
              <Small off icon={<ShortcutIcon />} text="粘贴快捷方式" />
            </SmallColumn>
          </GroupBody>
          <GroupLabel>剪贴板</GroupLabel>
        </Group>
        <Group $width={220}>
          <GroupBody>
            <Big width={50} off menu icon={<MoveIcon />} lines={["移动到"]} />
            <Big width={50} off menu icon={<CopyToIcon />} lines={["复制到"]} />
            <Divider />
            <Big width={46} menu icon={<DeleteIcon />} lines={["删除"]} />
            <Big width={54} off icon={<RenameIcon />} lines={["重命名"]} />
          </GroupBody>
          <GroupLabel>组织</GroupLabel>
        </Group>
        <Group $width={163}>
          <GroupBody>
            <Big width={48} icon={<Folder w={28} h={38} />} lines={["新建", "文件夹"]} />
            <SmallColumn $left={6}>
              <Small menu icon={<NewItemIcon />} text="新建项目" />
              <Small menu icon={<EasyIcon />} text="轻松访问" />
            </SmallColumn>
          </GroupBody>
          <GroupLabel>新建</GroupLabel>
        </Group>
        <Group $width={152}>
          <GroupBody>
            <Big width={48} menu icon={<CheckPage w={28} h={36} />} lines={["属性"]} />
            <SmallColumn $left={8} $roomy>
              <Small off menu icon={<OpenIcon />} text="打开" />
              <Small off icon={<EditIcon />} text="编辑" />
              <Small icon={<HistoryIcon />} text="历史记录" />
            </SmallColumn>
          </GroupBody>
          <GroupLabel>打开</GroupLabel>
        </Group>
        <Group $width={102}>
          <GroupBody>
            <SmallColumn $left={4}>
              <Small icon={<SelectIcon on={[0, 1, 2, 3]} />} text="全部选择" />
              <Small icon={<SelectIcon on={[]} />} text="全部取消" />
              <Small icon={<SelectIcon on={[1, 2]} />} text="反向选择" />
            </SmallColumn>
          </GroupBody>
          <GroupLabel>选择</GroupLabel>
        </Group>
      </Ribbon>

      <AddressRow>
        <NavButtons>
          <NavButton $width={39} aria-label="后退">
            <Chevron w={16} h={12} d="M7 1L2 6l5 5M2 6h14" c="#6a6a6a" />
          </NavButton>
          <NavButton $width={34} aria-label="前进">
            <Chevron w={16} h={12} d="M9 1l5 5-5 5M14 6H0" c="#d2d2d2" />
          </NavButton>
          <NavButton $width={24} aria-label="最近浏览的位置">
            <Chevron w={10} h={7} d="M1 1l4 4 4-4" c="#777" />
          </NavButton>
          <NavButton $width={14} aria-label="上移">
            <Chevron w={12} h={16} d="M1 7l5-5 5 5M6 2v14" c="#6a6a6a" />
          </NavButton>
        </NavButtons>
        <AddressBox>
          <Crumbs>
            <FirstIcon>
              <Folder />
            </FirstIcon>
            {crumbs.map((name) => (
              <React.Fragment key={name}>
                <Chevron w={6} h={10} d="M1 1l4 4-4 4" c="#777" />
                <Crumb href="#" $size={sizeFor(name)}>{name}</Crumb>
              </React.Fragment>
            ))}
          </Crumbs>
          <AddressButton aria-label="以前的位置">
            <Chevron w={12} h={8} d="M1 1l5 5 5-5" c="#777" />
          </AddressButton>
          <AddressButton $edge aria-label="刷新">
            <Chevron w={16} h={16} d="M4.500 3.500a6 6 0 1 0 7 0M1 2.500h5v5" c="#777" />
          </AddressButton>
        </AddressBox>
        <SearchBox aria-label="搜索">
          <Chevron w={16} h={16} d="M15 5.500a5 5 0 1 1-10 0a5 5 0 1 1 10 0zM6.500 9.500L.5 15.500" c="#777" s={1} />
          <SearchInput placeholder="在 lib 中搜索" />
        </SearchBox>
      </AddressRow>

      <Body>
        <Sidebar>
          <Tree>
            <TreeGroup>
              {pinned.map((name) => (
                <Item key={name} icon={<Folder />} text={name} pin />
              ))}
              {recent.map((name) => (
                <Item key={name} icon={<Folder />} text={name} />
              ))}
            </TreeGroup>
            <TreeGroup>
              <Item root icon={<CloudIcon />} text="OneDrive" />
            </TreeGroup>
            <TreeGroup>
              <Item root icon={<PcIcon />} text="此电脑" />
              {places.map(([name, icon], i) => (
                <Item key={name} icon={icon} text={name} selected={i === places.length - 1} />
              ))}
            </TreeGroup>
            <Item root icon={<NetworkIcon />} text="网络" />
          </Tree>
          <ScrollBar before={314} thumb={411} after={12} />
        </Sidebar>

        <FilePane>
          <FileTable>
            <Head>
              <HeadRow>
                <HeadCell $first>
                  名称
                  <SortMark>
                    <Chevron w={10} h={6} d="M.5 5.500L5 1l4.500 4.500" c="#777" s={1} />
                  </SortMark>
                </HeadCell>
                <HeadCell>修改日期</HeadCell>
                <HeadCell>类型</HeadCell>
                <HeadCell>大小</HeadCell>
              </HeadRow>
            </Head>
            <Rows>
              {files.map(([name, date, size]) => (
                <Row key={name} $hover={name.startsWith("spring-core")}>
                  <NameCell>
                    <PageIcon />
                    <FileName>{name}</FileName>
                  </NameCell>
                  <Cell>{date}</Cell>
                  <Cell>Executable Jar File</Cell>
                  <Cell $right>{size}</Cell>
                </Row>
              ))}
            </Rows>
          </FileTable>
          <ScrollBar before={103} thumb={633} after={0} />
        </FilePane>
      </Body>

      <StatusBar>
        <StatusText>32 个项目</StatusText>
        <StatusRule />
        <ViewButton $on aria-label="详细信息">
          <svg width="18" height="16" viewBox="0 0 18 16">
            <path d="M.5.5h5v4h-5zM.5 5.500h5v4h-5zM.5 10.500h5v5h-5z" fill="#fff" stroke="#8c8c8c" />
            <path d="M2 2h2v1.500H2zM2 7h2v1.500H2z" fill="#3d7a4a" />
            <path d="M2 12h2v2H2z" fill="#c23b2a" />
            <path d="M8 2.500h4M13 2.500h4M8 7.500h4M13 7.500h4M8 12.500h4M13 12.500h4" stroke="#777" />
          </svg>
        </ViewButton>
        <ViewButton aria-label="大图标">
          <PictureIcon />
        </ViewButton>
      </StatusBar>

      <ImeBar>
        <ImeLogo>
          <SogouLogo />
        </ImeLogo>
        <ImeButton>中</ImeButton>
        <ImeButton aria-label="标点">
          <svg width="14" height="14" viewBox="0 0 14 14" fill="#1e73c8">
            <circle cx="3.500" cy="3.500" r="2.500" />
            <path d="M9 6.500a2 2 0 0 1 4 .5c0 3-1.500 5-4 6l-.5-1c1.500-.7 2-1.800 2-3-1 0-1.500-1-1.500-2.500z" />
          </svg>
        </ImeButton>
        <ImeButton aria-label="表情">
          <svg width="21" height="21" viewBox="0 0 21 21" fill="none" stroke="#1e73c8" strokeWidth="2.200">
            <circle cx="10.500" cy="10.500" r="9" />
            <path d="M7.500 6v4M13.500 6v4M5.500 12c2 4.500 8 4.500 10 0" />
          </svg>
        </ImeButton>
        <ImeButton aria-label="语音">
          <svg width="16" height="20" viewBox="0 0 16 20" fill="none" stroke="#1e73c8" strokeWidth="2">
            <rect x="4.500" y="0" width="7" height="13" rx="3.500" fill="#1e73c8" stroke="none" />
            <path d="M1.500 8v1.500c0 7.500 13 7.500 13 0V8M8 15v4M4 19h8" />
          </svg>
        </ImeButton>
        <ImeButton $width={22} aria-label="键盘">
          <svg width="21" height="16" viewBox="0 0 21 16">
            <rect x="1" y="1" width="19" height="14" rx="1.500" fill="#fff" stroke="#1e73c8" strokeWidth="2" />
            <path d="M3 5h15M4 8.500h14" stroke="#1e73c8" strokeWidth="2.200" strokeDasharray="2 1" />
            <path d="M3 12h2M6 12h9M16 12h2" stroke="#1e73c8" strokeWidth="1.800" />
          </svg>
        </ImeButton>
        <ImeButton aria-label="账户">
          <svg width="20" height="19" viewBox="0 0 20 19">
            <circle cx="7" cy="4.500" r="4.500" fill="#b3c2dc" />
            <path d="M0 18c0-5 3-8 7-8h4v8z" fill="#b3c2dc" />
            <path d="M7.500 10.500h5v7h-5zM12.500 10.500h7v7h-7z" fill="#fff" stroke="#b3c2dc" />
            <path d="M16 12.500v1.200M16 15v1.200" stroke="#b3c2dc" strokeWidth="1.200" />
          </svg>
        </ImeButton>
        <ImeButton $width={18} aria-label="皮肤">
          <svg width="18" height="18" viewBox="0 0 18 18">
            <path d="M5 0c1.500 2 6.500 2 8 0l5 4-2 4-2-1v9.500c0 .8-.5 1.500-1.500 1.500h-7C4.500 18 4 17.300 4 16.500V7L2 8 0 4z" fill="#1e73c8" />
          </svg>
        </ImeButton>
        <ImeButton aria-label="工具箱">
          <svg width="17" height="17" viewBox="0 0 17 17" fill="#1e73c8">
            <rect width="8" height="8" rx="1.500" />
            <rect x="10" y="1" width="6" height="6" rx="1" fill="#fff" stroke="#1e73c8" strokeWidth="2" />
            <rect y="9" width="8" height="8" rx="1.500" />
            <rect x="9" y="9" width="8" height="8" rx="1.500" />
          </svg>
        </ImeButton>
      </ImeBar>

      <Watermark>CSDN @96岁对抗java</Watermark>
    </Window>
  );
}
